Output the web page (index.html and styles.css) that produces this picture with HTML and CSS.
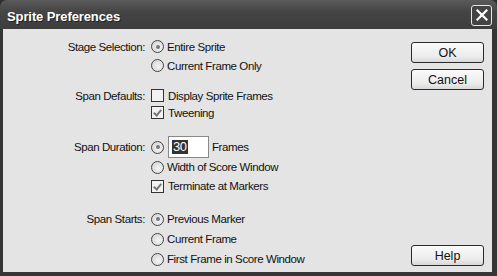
FILE: index.html
```html
<!DOCTYPE html>
<html lang="en">
<head>
    <meta charset="UTF-8">
    <title>Sprite Preferences</title>
    <link rel="stylesheet" href="styles.css">
</head>
<body>
    <div class="window">
        <div class="titlebar">
            <span class="title">Sprite Preferences</span>
            <span class="close">
                <svg width="12" height="12" viewBox="0 0 12 12"><path d="M1.5 1.5 L10.5 10.5 M10.5 1.5 L1.5 10.5" stroke="#fff" stroke-width="2.2" stroke-linecap="square"/></svg>
            </span>
        </div>
        <div class="dialog">
            <div class="form">
                <div class="group stage">
                    <div class="label">Stage Selection:</div>
                    <div class="opt"><span class="radio on"></span>Entire Sprite</div>
                    <div class="label"></div>
                    <div class="opt"><span class="radio"></span>Current Frame Only</div>
                </div>
                <div class="group defaults">
                    <div class="label">Span Defaults:</div>
                    <div class="opt"><span class="check"></span>Display Sprite Frames</div>
                    <div class="label"></div>
                    <div class="opt"><span class="check on"></span>Tweening</div>
                </div>
                <div class="group duration">
                    <div class="label">Span Duration:</div>
                    <div class="opt"><span class="radio on"></span><span class="field"><span class="sel">30</span></span>Frames</div>
                    <div class="label"></div>
                    <div class="opt"><span class="radio"></span>Width of Score Window</div>
                    <div class="label"></div>
                    <div class="opt"><span class="check on"></span>Terminate at Markers</div>
                </div>
                <div class="group starts">
                    <div class="label">Span Starts:</div>
                    <div class="opt"><span class="radio on"></span>Previous Marker</div>
                    <div class="label"></div>
                    <div class="opt"><span class="radio"></span>Current Frame</div>
                    <div class="label"></div>
                    <div class="opt"><span class="radio"></span>First Frame in Score Window</div>
                </div>
            </div>
            <div class="buttons">
                <button>OK</button>
                <button>Cancel</button>
                <button class="help">Help</button>
            </div>
        </div>
    </div>
</body>
</html>
```

FILE: styles.css
```css
body {
    margin: 0;
    font-family: "Liberation Sans", Arial, sans-serif;
    font-size: 11.5px;
    letter-spacing: -0.4px;
    color: #111;
    background: #2e2e2e;
}
.window {
    width: 497px;
    height: 276px;
    display: flex;
    flex-direction: column;
    background: #363636;
    border-radius: 7px 7px 0 0;
    overflow: hidden;
}
.titlebar {
    height: 29px;
    display: flex;
    align-items: center;
    justify-content: space-between;
    padding: 0 5px 0 7px;
    background: linear-gradient(#5a5a5a, #454545 40%, #3d3d3d);
}
.title {
    color: #fff;
    font-family: "Liberation Sans", Arial, sans-serif;
    font-weight: bold;
    font-size: 13px;
    letter-spacing: -0.1px;
    text-shadow: 1px 1px 0 #222;
    padding-top: 3px;
}
.close {
    width: 19px;
    height: 19px;
    border: 1px solid #e8e8e8;
    border-radius: 3px;
    background: #444;
    display: flex;
    align-items: center;
    justify-content: center;
    margin-top: 1px;
}
.dialog {
    height: 243px;
    margin: 0 5px 0 3px;
    background: #e4e4e4;
    display: flex;
}
.form {
    width: 408px;
    padding-top: 8px;
}
.group {
    display: grid;
    grid-template-columns: 142px auto;
    column-gap: 6px;
}
.label {
    display: flex;
    align-items: center;
    justify-content: flex-end;
}
.opt {
    display: flex;
    align-items: center;
    white-space: nowrap;
}
.stage { grid-auto-rows: 19px; }
.defaults { grid-auto-rows: 17px; margin-top: 12px; }
.duration { grid-template-rows: 22px 18px 20px; margin-top: 15px; }
.starts { grid-auto-rows: 20px; margin-top: 13px; }
.radio {
    width: 11px;
    height: 11px;
    border: 1px solid #444;
    border-radius: 50%;
    background: radial-gradient(circle at 60% 60%, #f4f4f4, #d0d0d0);
    margin-right: 3px;
    display: flex;
    align-items: center;
    justify-content: center;
    flex: none;
}
.radio.on::after {
    content: "";
    width: 4px;
    height: 4px;
    border-radius: 50%;
    background: #777;
}
.check {
    width: 11px;
    height: 11px;
    border: 1px solid #333;
    background: #f2f2f2;
    margin-right: 4px;
    position: relative;
    flex: none;
}
.check.on::after {
    content: "";
    position: absolute;
    left: 3px;
    top: 1px;
    width: 3px;
    height: 6px;
    border: solid #777;
    border-width: 0 2px 2px 0;
    transform: rotate(40deg);
}
.field {
    width: 41px;
    height: 22px;
    border: 1px solid #888;
    background: #fff;
    margin: 0 3px 0 1px;
    display: flex;
    align-items: center;
    padding-left: 3px;
    box-sizing: border-box;
}
.sel {
    background: #333;
    color: #fff;
    font-size: 13px;
    line-height: 14px;
    padding: 0 1px;
}
.buttons {
    display: flex;
    flex-direction: column;
    padding: 13px 0 6px 0;
    gap: 6px;
}
button {
    width: 73px;
    height: 21px;
    font-family: "Liberation Sans", Arial, sans-serif;
    font-size: 12.5px;
    color: #111;
    border: 1px solid #2a2a2a;
    border-radius: 3px;
    background: linear-gradient(#fafafa, #ececec 70%, #d8d8d8);
    padding: 0;
}
.help {
    margin-top: auto;
}
```
